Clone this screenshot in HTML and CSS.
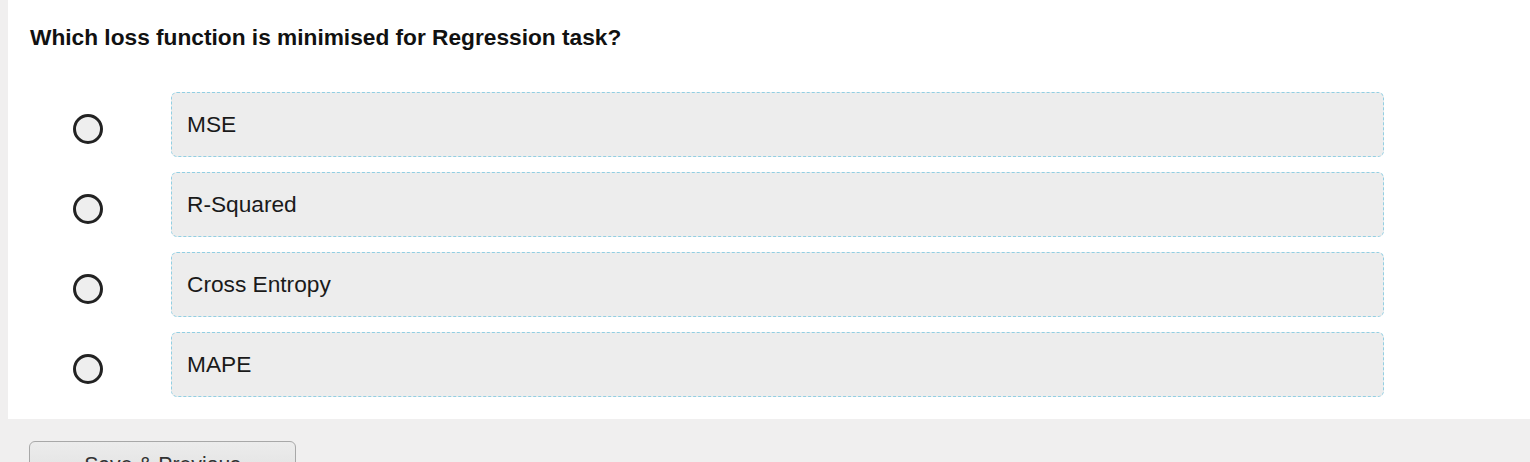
FILE: index.html
```html
<!DOCTYPE html>
<html lang="en">
<head>
    <meta charset="UTF-8">
    <meta name="viewport" content="width=device-width, initial-scale=1.0">
    <title>Quiz</title>
    <link rel="stylesheet" href="styles.css">
</head>
<body>
    <div class="question-panel">
        <h2 class="question">Which loss function is minimised for Regression task?</h2>
        <div class="options">
            <label class="option">
                <span class="radio"></span>
                <span class="option-box">MSE</span>
            </label>
            <label class="option">
                <span class="radio"></span>
                <span class="option-box">R-Squared</span>
            </label>
            <label class="option">
                <span class="radio"></span>
                <span class="option-box">Cross Entropy</span>
            </label>
            <label class="option">
                <span class="radio"></span>
                <span class="option-box">MAPE</span>
            </label>
        </div>
    </div>
    <div class="nav-buttons">
        <button class="btn">Save &amp; Previous</button>
    </div>
</body>
</html>
```

FILE: styles.css
```css
body {
    font-family: "Liberation Sans", Arial, sans-serif;
    margin: 0;
    padding: 0;
    background-color: #f0efef;
    color: #222;
}

.question-panel {
    margin-left: 8px;
    background-color: #fff;
    padding: 24px 0 22px 22px;
}

.question {
    margin: 0;
    font-size: 22.7px;
    line-height: 26px;
    font-weight: bold;
    color: #111;
}

.options {
    display: flex;
    flex-direction: column;
    gap: 15px;
    margin-top: 42px;
}

.option {
    display: flex;
    align-items: center;
    cursor: pointer;
}

.radio {
    box-sizing: border-box;
    width: 30px;
    height: 30px;
    margin: 8px 0 0 43px;
    border: 3.5px solid #222;
    border-radius: 50%;
    background-color: #eee;
    flex-shrink: 0;
}

.option-box {
    box-sizing: border-box;
    width: 1213px;
    height: 65px;
    margin-left: 68px;
    padding-left: 15px;
    display: flex;
    align-items: center;
    background-color: #ededed;
    border: 1px dashed #92cfe3;
    border-radius: 6px;
    font-size: 22.7px;
    color: #1a1a1a;
}

.nav-buttons {
    padding: 22px 0 0 29px;
}

.btn {
    width: 267px;
    height: 44px;
    font-family: inherit;
    font-size: 21.2px;
    color: #333;
    padding-top: 4px;
    background: linear-gradient(#ececec, #e0e0e0);
    border: 1px solid #a8a8a8;
    border-radius: 6px;
    cursor: pointer;
}
```
